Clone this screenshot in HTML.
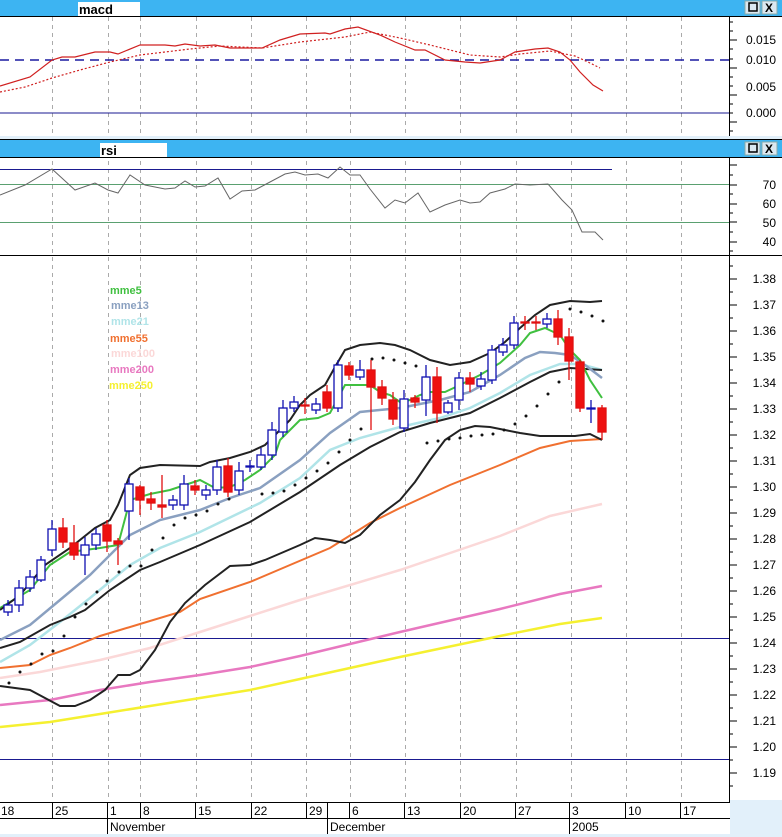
<!DOCTYPE html>
<html><head><meta charset="utf-8"><style>
html,body{margin:0;padding:0;background:#fff;width:782px;height:837px;overflow:hidden}
svg{display:block;font-family:"Liberation Sans",sans-serif}
</style></head><body>
<svg width="782" height="837" viewBox="0 0 782 837" xmlns="http://www.w3.org/2000/svg">
<rect width="782" height="837" fill="#fff"/>
<rect x="730" y="800" width="52" height="37" fill="#e2f0fa"/>
<rect x="0" y="834" width="782" height="3" fill="#e2f0fa"/>

<g stroke="#aaa" stroke-dasharray="4,4" stroke-width="1">
<path d="M52.5 17V800M108.5 17V800M140.5 17V800M196.5 17V800M251.5 17V800M306.5 17V800M350.5 17V800M405.5 17V800M460.5 17V800M516.5 17V800M571.5 17V800M626.5 17V800M681.5 17V800"/>
</g>

<rect x="0" y="0" width="782" height="16" fill="#3db4f2"/>
<rect x="78" y="2" width="62" height="15" fill="#fff"/>
<text x="79" y="14" font-size="13" font-weight="bold" fill="#000">macd</text>
<line x1="0" y1="16.5" x2="782" y2="16.5" stroke="#000"/>
<rect x="745" y="1" width="15" height="13" fill="#dbe8f0" stroke="#8aa"/>
<rect x="749" y="3" width="8" height="8" fill="none" stroke="#000" stroke-width="1.5"/>
<rect x="762" y="1" width="15" height="13" fill="#dbe8f0" stroke="#8aa"/>
<text x="765" y="12" font-size="12" font-weight="bold">X</text>

<line x1="0" y1="60" x2="729" y2="60" stroke="#1a1aa0" stroke-width="1.5" stroke-dasharray="9,6"/>
<line x1="0" y1="113" x2="729" y2="113" stroke="#1a1a90"/>
<polyline fill="none" stroke="#d02020" stroke-width="1.2" points="0,86 30,77 52,60 62,57 75,57 95,52 110,52 118,54 140,45 165,45 175,46 185,44 200,46 215,45 230,48 262,48 280,40 300,34 325,33 330,34 345,29 358,27 380,35 395,42 415,50 425,50 445,60 465,62 480,63 500,60 515,52 535,49 548,48 560,52 570,60 580,72 593,85 603,91"/>
<polyline fill="none" stroke="#d02020" stroke-width="1.2" stroke-dasharray="2,2" points="0,92 25,87 52,78 80,70 110,62 140,55 165,52 190,49 220,46 262,48 300,42 345,37 370,32 400,38 430,45 470,55 500,57 520,54 550,51 575,56 590,63 600,68"/>
<line x1="729.5" y1="17" x2="729.5" y2="136" stroke="#000"/>
<g stroke="#000"><path d="M729 22h4M729 31h4M729 40h8M729 49h4M729 59h4M729 68h8M729 77h4M729 86h4M729 95h8M729 104h4M729 113h4M729 122h8M729 131h4"/></g>
<g font-size="12" fill="#000" text-anchor="end">
<text x="776" y="44">0.015</text><text x="776" y="64">0.010</text><text x="776" y="91">0.005</text><text x="776" y="117">0.000</text>
</g>

<rect x="0" y="136" width="782" height="3" fill="#e2f0fa"/>
<line x1="0" y1="139.5" x2="782" y2="139.5" stroke="#000"/>
<rect x="0" y="140" width="782" height="17" fill="#3db4f2"/>
<rect x="100" y="143" width="67" height="15" fill="#fff"/>
<text x="101" y="155" font-size="13" font-weight="bold" fill="#000">rsi</text>
<line x1="0" y1="157.5" x2="782" y2="157.5" stroke="#000"/>
<rect x="745" y="142" width="15" height="13" fill="#dbe8f0" stroke="#8aa"/>
<rect x="749" y="144" width="8" height="8" fill="none" stroke="#000" stroke-width="1.5"/>
<rect x="762" y="142" width="15" height="13" fill="#dbe8f0" stroke="#8aa"/>
<text x="765" y="153" font-size="12" font-weight="bold">X</text>

<line x1="0" y1="169.5" x2="612" y2="169.5" stroke="#1a1a90"/>
<line x1="0" y1="184.5" x2="729" y2="184.5" stroke="#5aa070"/>
<line x1="0" y1="222.5" x2="729" y2="222.5" stroke="#5aa070"/>
<polyline fill="none" stroke="#666" stroke-width="1" points="0,195 25,185 52,169 75,190 95,183 108,190 118,193 130,175 145,185 165,189 175,188 185,181 195,187 205,186 218,178 230,199 242,191 255,190 270,182 285,174 295,172 305,175 318,174 328,178 340,167 350,175 360,175 370,189 385,208 395,200 405,203 418,193 430,212 445,205 460,200 470,203 480,202 490,193 505,189 515,184 530,185 548,184 562,200 572,210 582,232 595,232 603,240"/>
<line x1="729.5" y1="158" x2="729.5" y2="255" stroke="#000"/>
<g stroke="#000"><path d="M729 165h8M729 175h4M729 185h8M729 194h4M729 204h8M729 213h4M729 222h8M729 232h4M729 242h8M729 251h4"/></g>
<g font-size="12" fill="#000" text-anchor="end">
<text x="776" y="189">70</text><text x="776" y="208">60</text><text x="776" y="227">50</text><text x="776" y="246">40</text>
</g>
<line x1="0" y1="255.5" x2="782" y2="255.5" stroke="#000"/>

<line x1="0" y1="638.5" x2="729" y2="638.5" stroke="#1a1a90"/>
<line x1="0" y1="759.5" x2="729" y2="759.5" stroke="#1a1a90"/>

<polyline fill="none" stroke="#f5f030" stroke-width="2.5" points="0,727 50,722 100,714 150,706 200,698 250,690 300,679 400,657 500,636 560,624 602,618"/>
<polyline fill="none" stroke="#e878c0" stroke-width="2.5" points="0,705 50,700 100,690 150,682 200,675 250,667 300,656 400,632 500,609 560,594 602,586"/>
<polyline fill="none" stroke="#fbd8d8" stroke-width="2.5" points="0,678 40,672 100,660 150,648 200,632 250,616 300,600 400,570 500,536 550,516 602,504"/>
<polyline fill="none" stroke="#f07030" stroke-width="2" points="0,668 30,665 50,655 70,648 100,636 120,630 140,624 180,612 200,599 250,582 290,565 330,548 370,523 400,508 450,485 500,465 540,448 570,441 602,439"/>
<polyline fill="none" stroke="#222" stroke-width="2" points="0,686 30,690 45,698 60,706 75,706 90,700 105,690 118,675 130,675 140,670 155,650 170,622 185,603 205,585 230,566 250,565 265,560 300,545 315,538 330,540 345,543 360,535 380,515 400,500 415,482 430,460 445,440 460,430 475,426 490,427 505,430 520,433 540,436 560,436 575,436 590,434 602,440"/>
<polyline fill="none" stroke="#b0e4e8" stroke-width="2.5" points="0,662 30,645 60,622 90,598 130,565 160,548 200,532 260,503 300,478 330,450 360,438 400,427 440,418 470,408 500,393 530,375 560,364 580,364 602,370"/>
<polyline fill="none" stroke="#222" stroke-width="2" points="0,648 20,642 50,625 70,617 85,610 110,590 140,570 160,562 200,545 250,522 300,492 340,465 370,447 400,432 430,423 470,413 500,398 530,382 550,372 570,368 602,370"/>
<polyline fill="none" stroke="#8aa0c0" stroke-width="2.5" points="0,640 30,625 60,600 90,575 130,535 160,520 200,510 230,498 260,488 300,460 330,433 360,412 400,408 440,400 470,392 500,375 525,358 540,352 555,353 570,355 585,365 602,378"/>
<polyline fill="none" stroke="#40c040" stroke-width="2" points="0,608 30,590 50,565 70,552 100,548 118,545 130,500 150,494 170,490 200,480 215,488 230,487 245,480 260,470 275,455 280,440 300,420 318,418 330,413 345,385 358,385 370,385 380,392 390,395 400,402 410,400 420,395 430,392 445,392 460,385 480,375 500,363 520,345 530,333 545,328 560,335 570,350 580,360 590,380 602,398"/>
<polyline fill="none" stroke="#222" stroke-width="2" points="0,610 20,595 45,565 70,548 95,528 110,520 118,505 130,475 140,468 160,465 200,466 210,462 230,458 250,452 265,445 280,430 290,420 300,405 310,395 325,385 335,367 345,350 360,345 380,343 395,345 410,350 430,360 450,365 470,362 490,353 505,342 520,328 535,315 550,305 570,301 590,302 602,301"/>

<g fill="#111">
<circle cx="9" cy="683" r="1.5"/><circle cx="20" cy="672" r="1.5"/><circle cx="31" cy="664" r="1.5"/><circle cx="42" cy="654" r="1.5"/><circle cx="53" cy="651" r="1.5"/><circle cx="64" cy="636" r="1.5"/><circle cx="75" cy="617" r="1.5"/><circle cx="86" cy="604" r="1.5"/><circle cx="97" cy="592" r="1.5"/><circle cx="107" cy="581" r="1.5"/><circle cx="119" cy="572" r="1.5"/><circle cx="130" cy="566" r="1.5"/><circle cx="141" cy="566" r="1.5"/><circle cx="152" cy="550" r="1.5"/><circle cx="163" cy="538" r="1.5"/><circle cx="174" cy="525" r="1.5"/><circle cx="185" cy="518" r="1.5"/><circle cx="196" cy="515" r="1.5"/><circle cx="207" cy="511" r="1.5"/><circle cx="218" cy="504" r="1.5"/><circle cx="229" cy="499" r="1.5"/><circle cx="262" cy="494" r="1.5"/><circle cx="273" cy="493" r="1.5"/><circle cx="284" cy="491" r="1.5"/><circle cx="295" cy="485" r="1.5"/><circle cx="306" cy="478" r="1.5"/><circle cx="317" cy="471" r="1.5"/><circle cx="328" cy="463" r="1.5"/><circle cx="339" cy="452" r="1.5"/><circle cx="350" cy="440" r="1.5"/><circle cx="361" cy="429" r="1.5"/>
<circle cx="372" cy="359" r="1.5"/><circle cx="383" cy="358" r="1.5"/><circle cx="394" cy="360" r="1.5"/><circle cx="405" cy="363" r="1.5"/><circle cx="416" cy="366" r="1.5"/>
<circle cx="427" cy="443" r="1.5"/><circle cx="438" cy="441" r="1.5"/><circle cx="449" cy="439" r="1.5"/><circle cx="460" cy="438" r="1.5"/><circle cx="471" cy="436" r="1.5"/><circle cx="482" cy="435" r="1.5"/><circle cx="493" cy="434" r="1.5"/><circle cx="504" cy="430" r="1.5"/><circle cx="515" cy="424" r="1.5"/><circle cx="526" cy="416" r="1.5"/><circle cx="537" cy="406" r="1.5"/><circle cx="548" cy="394" r="1.5"/><circle cx="559" cy="382" r="1.5"/>
<circle cx="570" cy="309" r="1.5"/><circle cx="581" cy="312" r="1.5"/><circle cx="592" cy="316" r="1.5"/><circle cx="603" cy="321" r="1.5"/>
</g>

<g stroke="#1010b0" stroke-width="1.3" fill="#fff">
<path d="M8 600V616M19 580V612M30 570V592M41 556V582M52 520V556M85 537V575M96 528V550M129 478V540M173 495V510M184 475V510M206 485V500M217 460V495M239 462V495M250 460V472M261 448V470M272 422V460M283 400V437M294 396V412M316 398V414M338 360V412M360 360V380M404 390V432M426 365V416M448 400V414M459 372V410M481 372V390M492 345V384M503 338V356M514 316V349M547 313V328M591 400V423" fill="none"/>
<rect x="4" y="605" width="8" height="7"/><rect x="15" y="588" width="8" height="17"/><rect x="26" y="577" width="8" height="11"/><rect x="37" y="560" width="8" height="20"/><rect x="48" y="529" width="8" height="21"/><rect x="81" y="545" width="8" height="10"/><rect x="92" y="534" width="8" height="11"/><rect x="125" y="484" width="8" height="27"/><rect x="169" y="500" width="8" height="5"/><rect x="180" y="484" width="8" height="21"/><rect x="202" y="490" width="8" height="5"/><rect x="213" y="467" width="8" height="23"/><rect x="235" y="471" width="8" height="19"/><rect x="246" y="466" width="8" height="1"/><rect x="257" y="455" width="8" height="12"/><rect x="268" y="430" width="8" height="25"/><rect x="279" y="408" width="8" height="24"/><rect x="290" y="402" width="8" height="6"/><rect x="312" y="404" width="8" height="6"/><rect x="334" y="365" width="8" height="43"/><rect x="356" y="370" width="8" height="7"/><rect x="400" y="399" width="8" height="29"/><rect x="422" y="377" width="8" height="23"/><rect x="444" y="403" width="8" height="9"/><rect x="455" y="378" width="8" height="22"/><rect x="477" y="379" width="8" height="7"/><rect x="488" y="350" width="8" height="30"/><rect x="499" y="345" width="8" height="7"/><rect x="510" y="323" width="8" height="22"/><rect x="543" y="319" width="8" height="5"/><rect x="587" y="408" width="8" height="1"/>
</g>
<g stroke="#e01010" stroke-width="1.3" fill="#ee1010">
<path d="M63 518V548M74 525V560M107 520V552M118 538V565M140 485V515M151 492V510M162 475V518M195 480V495M228 458V497M305 398V414M327 385V412M349 362V380M371 360V430M382 380V405M393 392V425M415 395V408M437 367V423M470 372V392M525 316V330M536 316V330M558 310V345M569 328V380M580 360V412M602 405V440" fill="none"/>
<rect x="59" y="528" width="8" height="14"/><rect x="70" y="543" width="8" height="12"/><rect x="103" y="525" width="8" height="16"/><rect x="114" y="541" width="8" height="3"/><rect x="136" y="487" width="8" height="13"/><rect x="147" y="499" width="8" height="4"/><rect x="158" y="505" width="8" height="2"/><rect x="191" y="486" width="8" height="4"/><rect x="224" y="466" width="8" height="26"/><rect x="301" y="405" width="8" height="1"/><rect x="323" y="392" width="8" height="16"/><rect x="345" y="366" width="8" height="9"/><rect x="367" y="370" width="8" height="17"/><rect x="378" y="387" width="8" height="11"/><rect x="389" y="400" width="8" height="19"/><rect x="411" y="398" width="8" height="4"/><rect x="433" y="377" width="8" height="36"/><rect x="466" y="378" width="8" height="6"/><rect x="521" y="322" width="8" height="1"/><rect x="532" y="322" width="8" height="1"/><rect x="554" y="319" width="8" height="18"/><rect x="565" y="337" width="8" height="24"/><rect x="576" y="362" width="8" height="46"/><rect x="598" y="408" width="8" height="24"/>
</g>

<g font-size="11" font-weight="bold">
<text x="110" y="294" fill="#40c040">mme5</text>
<text x="111" y="309" fill="#8aa0c0">mme13</text>
<text x="111" y="325" fill="#b0e4e8">mme21</text>
<text x="110" y="342" fill="#f07030">mme55</text>
<text x="111" y="357" fill="#fbd8d8">mme100</text>
<text x="110" y="373" fill="#e878c0">mme200</text>
<text x="109" y="389" fill="#f5f030">mme250</text>
</g>

<line x1="729.5" y1="256" x2="729.5" y2="802" stroke="#000"/>
<g stroke="#000">
<path d="M729 266h4M729 279h8M729 292h4M729 305h8M729 318h4M729 331h8M729 344h4M729 357h8M729 370h4M729 383h8M729 396h4M729 409h8M729 422h4M729 435h8M729 448h4M729 461h8M729 474h4M729 487h8M729 500h4M729 513h8M729 526h4M729 539h8M729 552h4M729 565h8M729 578h4M729 591h8M729 604h4M729 617h8M729 630h4M729 643h8M729 656h4M729 669h8M729 682h4M729 695h8M729 708h4M729 721h8M729 734h4M729 747h8M729 760h4M729 773h8M729 786h4"/>
</g>
<g font-size="12" fill="#000" text-anchor="end">
<text x="776" y="283">1.38</text><text x="776" y="309">1.37</text><text x="776" y="335">1.36</text><text x="776" y="361">1.35</text><text x="776" y="387">1.34</text><text x="776" y="413">1.33</text><text x="776" y="439">1.32</text><text x="776" y="465">1.31</text><text x="776" y="491">1.30</text><text x="776" y="517">1.29</text><text x="776" y="543">1.28</text><text x="776" y="569">1.27</text><text x="776" y="595">1.26</text><text x="776" y="621">1.25</text><text x="776" y="647">1.24</text><text x="776" y="673">1.23</text><text x="776" y="699">1.22</text><text x="776" y="725">1.21</text><text x="776" y="751">1.20</text><text x="776" y="777">1.19</text>
</g>

<line x1="0" y1="802.5" x2="730" y2="802.5" stroke="#000"/>
<line x1="0" y1="818.5" x2="730" y2="818.5" stroke="#000"/>
<g stroke="#000"><path d="M52.5 802V818M107.5 802V834M140.5 802V818M195.5 802V818M251.5 802V818M306.5 802V818M327.5 802V834M349.5 802V818M404.5 802V818M460.5 802V818M515.5 802V818M569.5 802V834M625.5 802V818M680.5 802V818"/></g>
<g font-size="12" fill="#000">
<text x="1" y="815">18</text><text x="55" y="815">25</text><text x="110" y="815">1</text><text x="143" y="815">8</text><text x="198" y="815">15</text><text x="254" y="815">22</text><text x="309" y="815">29</text><text x="352" y="815">6</text><text x="407" y="815">13</text><text x="463" y="815">20</text><text x="518" y="815">27</text><text x="572" y="815">3</text><text x="628" y="815">10</text><text x="683" y="815">17</text>
<text x="110" y="831">November</text><text x="330" y="831">December</text><text x="572" y="831">2005</text>
</g>
</svg>
</body></html>
